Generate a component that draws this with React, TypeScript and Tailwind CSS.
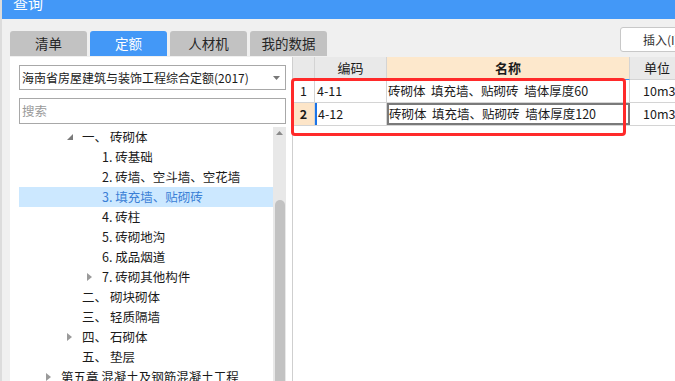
const font = { fontFamily: '"Noto Sans CJK SC", "Noto Sans", sans-serif' };

type Node = {
  indent: number;
  arrow?: "open" | "closed";
  num?: string;
  label: string;
  selected?: boolean;
};

const tree: Node[] = [
  { indent: 63, arrow: "open", num: "一、", label: "砖砌体" },
  { indent: 83, label: "1. 砖基础" },
  { indent: 83, label: "2. 砖墙、空斗墙、空花墙" },
  { indent: 83, label: "3. 填充墙、贴砌砖", selected: true },
  { indent: 83, label: "4. 砖柱" },
  { indent: 83, label: "5. 砖砌地沟" },
  { indent: 83, label: "6. 成品烟道" },
  { indent: 83, arrow: "closed", label: "7. 砖砌其他构件" },
  { indent: 63, num: "二、", label: "砌块砌体" },
  { indent: 63, num: "三、", label: "轻质隔墙" },
  { indent: 63, arrow: "closed", num: "四、", label: "石砌体" },
  { indent: 63, num: "五、", label: "垫层" },
  { indent: 42, arrow: "closed", label: "第五章 混凝土及钢筋混凝土工程" },
];

function Arrow({ kind }: { kind?: "open" | "closed" }) {
  if (!kind) return <span className="w-[19px] shrink-0" />;
  return (
    <span className="w-[19px] shrink-0 flex items-center pl-[4px]">
      {kind === "open" ? (
        <svg width="6" height="6" viewBox="0 0 6 6">
          <polygon points="6,0 6,6 0,6" fill="#7a7a7a" />
        </svg>
      ) : (
        <svg width="5" height="8" viewBox="0 0 5 8">
          <polygon points="0,0 5,4 0,8" fill="#9a9a9a" />
        </svg>
      )}
    </span>
  );
}

function TreeRow({ node }: { node: Node }) {
  return (
    <div
      className={`h-[20px] flex items-center whitespace-nowrap text-[12.5px] ${
        node.selected ? "bg-[#cce8ff] text-[#3a7fd6]" : "text-[#1a1a1a]"
      }`}
      style={{ paddingLeft: node.indent - 19 }}
    >
      <Arrow kind={node.arrow} />
      {node.num && <span className="w-[28px] shrink-0">{node.num}</span>}
      <span>{node.label}</span>
    </div>
  );
}

const tabs = ["清单", "定额", "人材机", "我的数据"];

export default function App() {
  return (
    <div
      className="w-[675px] h-[381px] overflow-hidden bg-[#f0f0f0] relative border-l-2 border-[#dcdcdc]"
      style={font}
    >
      {/* title bar */}
      <div className="h-[19px] bg-[#4398f7] overflow-hidden pl-[11px]">
        <span className="block text-white text-[15px] leading-[15px] -mt-[5px]">查询</span>
      </div>

      {/* tabs + insert button */}
      <div className="h-[38px] flex items-start pl-[8px]">
        <div className="flex gap-[3px] mt-[12px]">
          {tabs.map((t) => (
            <div
              key={t}
              className={`w-[77px] h-[25px] rounded-t-[3px] flex items-center justify-center text-[13.5px] ${
                t === "定额" ? "bg-[#4398f7] text-white" : "bg-[#c2c2c2] text-[#262626]"
              }`}
            >
              {t}
            </div>
          ))}
        </div>
        <div className="ml-auto mt-[8px] w-[60px] h-[25px] -mr-[5px] bg-white border border-[#c8c8c8] rounded-[3px] flex items-center pl-[22px] text-[12px] text-[#333] whitespace-nowrap">
          插入(I)
        </div>
      </div>

      {/* body */}
      <div className="flex h-[324px] ml-[8px] bg-white">
        {/* left panel */}
        <div className="w-[282px] shrink-0 flex flex-col">
          <div className="mt-[8px] ml-[9px] w-[267px] h-[25px] border border-[#a8a8a8] flex items-center pl-[2px] pr-[5px] text-[12px] text-[#1a1a1a] whitespace-nowrap">
            <span>海南省房屋建筑与装饰工程综合定额(2017)</span>
            <svg className="ml-auto" width="7" height="4" viewBox="0 0 7 4">
              <polygon points="0,0 7,0 3.5,4" fill="#777" />
            </svg>
          </div>
          <div className="mt-[8px] ml-[9px] w-[267px] h-[26px] border border-[#a8a8a8] flex items-center pl-[2px] text-[12.5px] text-[#9a9a9a]">
            搜索
          </div>
          <div className="flex flex-1 mt-[3px] ml-[9px] min-h-0">
            <div className="w-[254px] shrink-0 overflow-hidden">
              {tree.map((n, i) => (
                <TreeRow key={i} node={n} />
              ))}
            </div>
            <div className="w-[13px] bg-[#e8e8e8] flex flex-col items-center">
              <svg className="mt-[4px]" width="7" height="4" viewBox="0 0 7 4">
                <polygon points="3.5,0 7,4 0,4" fill="#8a8a8a" />
              </svg>
              <div className="mt-[65px] w-[10px] flex-1 bg-[#c2c2c2] rounded-t-[5px]" />
            </div>
          </div>
        </div>

        {/* right table */}
        <div className="flex-1 border-l border-[#cfcfcf] text-[12.5px] text-[#1a1a1a] relative">
          <div className="flex h-[23px] border-b border-[#d4d4d4]">
            <div className="w-[22px] shrink-0 bg-[#e9e9e9] border-r border-[#d4d4d4]" />
            <div className="w-[72px] shrink-0 bg-[#e9e9e9] border-r border-[#d4d4d4] flex items-center justify-center text-[13px]">
              编码
            </div>
            <div className="w-[243px] shrink-0 bg-[#fde8cc] border-r border-[#d4d4d4] flex items-center justify-center text-[13px] font-bold">
              名称
            </div>
            <div className="flex-1 bg-[#e9e9e9] flex items-center pl-[14px] text-[13px]">单位</div>
          </div>
          <div className="flex h-[23px] border-b border-[#d4d4d4]">
            <div className="w-[22px] shrink-0 border-r border-[#d4d4d4] flex items-center justify-center">1</div>
            <div className="w-[72px] shrink-0 border-r border-[#d4d4d4] flex items-center pl-[2px]">4-11</div>
            <div className="w-[243px] shrink-0 border-r border-[#d4d4d4] border-t border-t-[#3d8ef0] -mt-px flex items-center pl-[1px] whitespace-pre">
              砖砌体  填充墙、贴砌砖  墙体厚度60
            </div>
            <div className="flex-1 flex items-center pl-[13px]">10m3</div>
          </div>
          <div className="flex h-[23px] border-b border-[#d4d4d4]">
            <div className="w-[22px] shrink-0 bg-[#fde5c8] border-r border-[#d4d4d4] flex items-center justify-center font-bold">
              2
            </div>
            <div className="w-[72px] shrink-0 border-r border-[#d4d4d4] border-l-2 border-l-[#1a73e8] flex items-center pl-[1px]">
              4-12
            </div>
            <div className="w-[243px] shrink-0 border-2 border-[#7a7a7a] flex items-center whitespace-pre">
              砖砌体  填充墙、贴砌砖  墙体厚度120
            </div>
            <div className="flex-1 flex items-center pl-[13px]">10m3</div>
          </div>
        </div>
      </div>

      {/* red annotation box */}
      <div className="absolute left-[289px] top-[78px] w-[335px] h-[58px] border-[3px] border-[#ff2a2a] rounded-[4px]" />
    </div>
  );
}
